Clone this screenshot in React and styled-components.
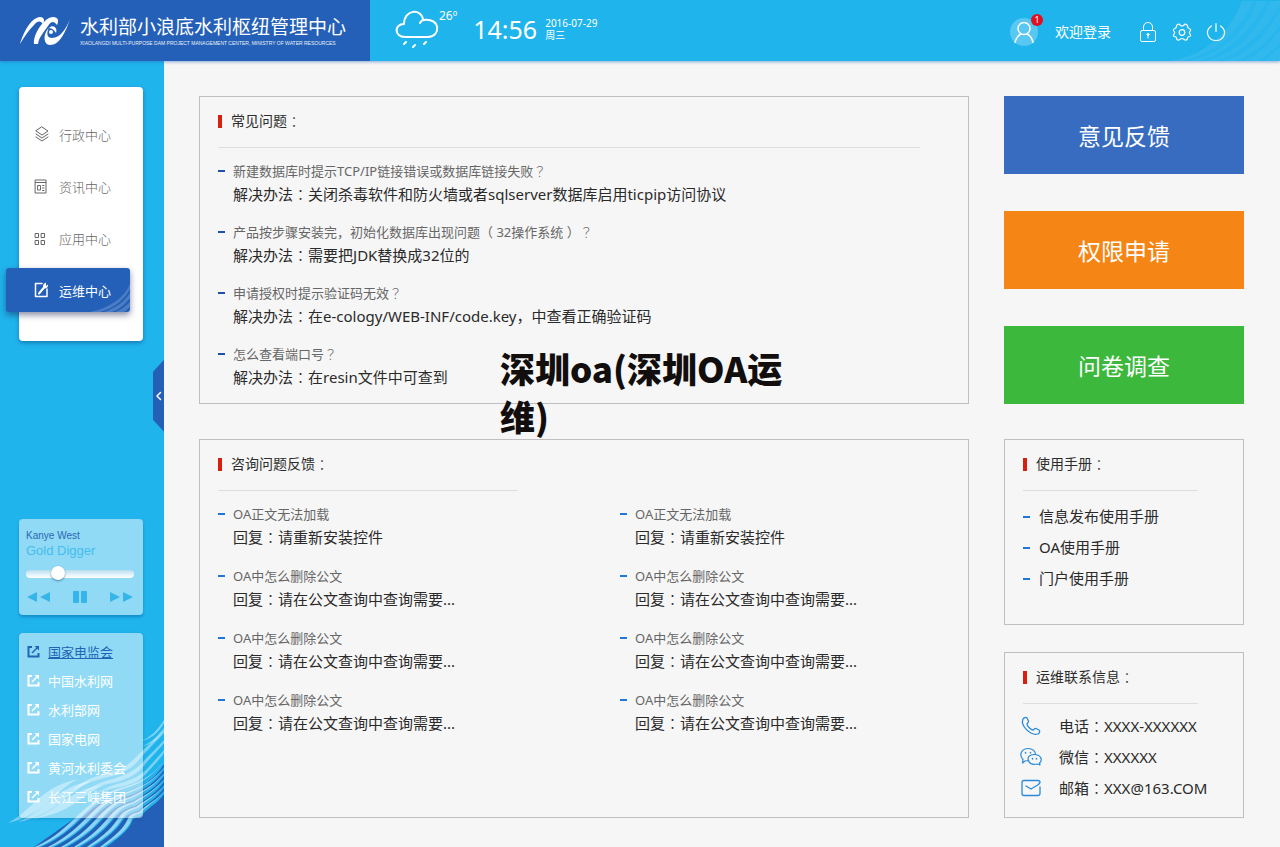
import React from 'react';
import styled, { createGlobalStyle, css } from 'styled-components';

const faqs = [
  { q: '新建数据库时提示TCP/IP链接错误或数据库链接失败？', a: '解决办法：关闭杀毒软件和防火墙或者sqlserver数据库启用ticpip访问协议' },
  { q: '产品按步骤安装完，初始化数据库出现问题（ 32操作系统 ）？', a: '解决办法：需要把JDK替换成32位的' },
  { q: '申请授权时提示验证码无效？', a: '解决办法：在e-cology/WEB-INF/code.key，中查看正确验证码' },
  { q: '怎么查看端口号？', a: '解决办法：在resin文件中可查到' },
];

const loadReply = { q: 'OA正文无法加载', a: '回复：请重新安装控件' };
const deleteReply = { q: 'OA中怎么删除公文', a: '回复：请在公文查询中查询需要...' };
const replies = [
  loadReply, loadReply,
  deleteReply, deleteReply,
  deleteReply, deleteReply,
  deleteReply, deleteReply,
];

const manuals = ['信息发布使用手册', 'OA使用手册', '门户使用手册'];
const sites = ['国家电监会', '中国水利网', '水利部网', '国家电网', '黄河水利委会', '长江三峡集团'];

// full-width marks sit in the middle of their box in the traditional face
function Words({ children }) {
  return children.split(/([：？])/).map((part, i) => (
    i % 2 ? <Mark key={i}>{part}</Mark> : part
  ));
}

function Logo() {
  return (
    <svg width="50" height="30" viewBox="0 0 50 30" fill="#fff" aria-hidden="true">
      <path d="M0 28 C4 15 11 2 20 1 C24 1 25 4 23 8 C20 4 17 5 14 9 C8 15 4 21 0 28Z" />
      <path d="M14 28 C13 22 18 11 25 5 C29 1 36 -1 38 4 C38 6 38 7 37 9 C34 5 31 5 28 10 C24 16 19 21 18 28Z" />
      <path d="M50 3 C46 15 40 29 30 29 C23 29 23 17 29 12 C26 17 27 22 32 22 C40 22 46 13 50 3Z" />
      <path d="M29 12 C33 8 38 12 36 17 C35 15 32 12 29 12Z" />
      <circle cx="31" cy="16" r="2" />
    </svg>
  );
}

function Weather() {
  return (
    <svg width="44" height="38" viewBox="0 0 44 38" fill="none" stroke="#fff" strokeWidth="2" strokeLinecap="round" aria-hidden="true">
      <path d="M10 27 C-1 27 -1 14 9 14 C9 -1 27 -2 28 10 C46 7 46 27 33 27 Z" strokeLinejoin="round" />
      <path d="M25 13 C26 11 27 10 29 10" />
      <path d="M11 32 L9 34 M20 35 L18 37 M31 32 L29 34" />
    </svg>
  );
}

function Rays() {
  return (
    <RaysArt viewBox="0 0 110 60" fill="#fff" fillOpacity="0.08" aria-hidden="true">
      <path d="M0 60 C35 54 58 35 72 0 L110 0 L110 60Z" />
      <g fill="#20b4ed" fillOpacity="0.5">
        <path d="M14 60 C50 50 72 26 84 0 L87 0 C76 30 54 52 20 60Z" />
        <path d="M30 60 C64 48 84 26 97 0 L100 0 C88 30 68 52 36 60Z" />
        <path d="M48 60 C78 48 98 26 110 4 L110 9 C98 32 80 52 54 60Z" />
        <path d="M68 60 C88 50 102 36 110 24 L110 29 C100 42 88 54 74 60Z" />
        <path d="M88 60 C98 54 106 47 110 42 L110 46 L94 60Z" />
      </g>
    </RaysArt>
  );
}

const waveStripes = [0, 1, 2, 3, 4, 5];

function stripePath(i, thickness) {
  const x = 35 + i * 13;
  const y = 44 + i * 6;
  return `M${x} 130 C${x + 40} ${112 - i * 2} ${84 + i * 7} ${80 + i * 4} ${124 + i * 3} ${70 + i * 5} `
    + `C${146 + i} ${64 + i * 4} 156 ${y + 10} 164 ${y} L164 ${y + thickness - 1} `
    + `C156 ${y + 10 + thickness} ${146 + i} ${64 + thickness + i * 4} ${126 + i * 3} ${70 + thickness + i * 5} `
    + `C${88 + i * 7} ${80 + thickness + i * 4} ${x + 44} ${114 - i * 2} ${x + thickness + 2} 130Z`;
}

function Waves() {
  return (
    <WavesArt viewBox="0 0 164 130" aria-hidden="true">
      <path fill="#2460b7" d="M164 47 C152 66 140 70 118 78 C90 88 66 108 34 130 L164 130Z" />
      <g fill="#25b0ea">
        {waveStripes.map((i) => <path key={i} d={stripePath(i, 4)} />)}
      </g>
      <g fill="#d4effb" fillOpacity="0.6">
        {waveStripes.map((i) => <path key={i} d={stripePath(i, 1)} />)}
      </g>
      <g fill="#fff" fillOpacity="0.4">
        <path d="M8 106 C32 94 40 70 78 62 C54 74 44 98 8 106Z" />
        <path d="M18 105 C46 94 54 70 92 64 C66 76 54 99 18 105Z" />
        <path d="M32 102 C58 94 68 72 104 68 C82 78 70 97 32 102Z" />
        <path d="M72 74 C94 52 116 62 136 40 C148 28 156 22 164 13 L164 16 C154 27 146 34 138 44 C120 64 98 57 72 74Z" />
        <path d="M82 77 C104 58 122 66 142 46 C150 37 158 30 164 23 L164 26 C156 36 149 42 143 50 C124 70 106 62 82 77Z" />
        <path d="M94 78 C116 63 132 68 148 51 L164 33 L164 36 C156 47 150 52 146 57 C130 73 116 67 94 78Z" />
        <path d="M139 24 C150 22 158 12 164 3 L164 6 C158 17 150 23 139 24Z" />
        <path d="M142 29 C152 26 158 18 164 11 L164 13 C158 22 152 28 142 29Z" />
      </g>
    </WavesArt>
  );
}

function Icon({ size = 16, box = 16, children, ...rest }) {
  return (
    <svg
      width={size} height={size} viewBox={`0 0 ${box} ${box}`}
      fill="none" stroke="currentColor" strokeLinecap="round" strokeLinejoin="round" aria-hidden="true" {...rest}
    >
      {children}
    </svg>
  );
}

const LayersIcon = () => (
  <Icon>
    <path d="M8 1 L14 5 L8 9 L2 5Z M2 8 L8 12 L14 8 M2 11 L8 15 L14 11" />
  </Icon>
);

const NewsIcon = () => (
  <Icon>
    <path d="M1.5 2 H12 V15 H1.5Z M1.5 4.5 H12 M4 7.5 H6.5 V12 H4Z M8.5 7.5 H10 M8.5 10 H10 M8.5 12.5 H10" />
  </Icon>
);

const AppsIcon = () => (
  <Icon strokeLinejoin="miter">
    <path d="M1.5 3.5 H4.5 V7.5 H1.5Z M7.5 3.5 H10.5 V7.5 H7.5Z M1.5 10.5 H4.5 V14.5 H1.5Z M7.5 10.5 H10.5 V14.5 H7.5Z" />
  </Icon>
);

const WrenchIcon = () => (
  <Icon strokeWidth="1.5">
    <path d="M8 1.5 H1.5 V14.5 H13 V7" />
    <path d="M5 11.5 L10 5.5" strokeWidth="2" />
    <path d="M12 0.5 C8 2 8.5 6 10.5 6.5 C13 6.5 14.5 4.5 14 2.5 L12 4Z" fill="currentColor" stroke="none" />
  </Icon>
);

const ShareIcon = () => (
  <Icon size={13} box={13} strokeWidth="2" strokeLinecap="butt" strokeLinejoin="miter">
    <path d="M5 2 H1.5 V11.5 H11.5 V8" />
    <path d="M5 8 L10 3" strokeWidth="1.5" />
    <path d="M7.5 1 H12 V5.5Z" fill="currentColor" stroke="none" />
  </Icon>
);

const UserIcon = () => (
  <Icon size={22} box={22} strokeWidth="1.5">
    <circle cx="11" cy="7.5" r="6" />
    <path d="M2 21.5 C3 16.5 5 14.5 8 13 M14 13 C17 14.5 19 16.5 20 21.5" />
  </Icon>
);

const LockIcon = () => (
  <Icon size={20} box={20}>
    <rect x="2.5" y="8.5" width="15" height="11" rx="1.5" />
    <path d="M5.5 8.5 V5 C5.5 -1 14.5 -1 14.5 5 V8.5 M10 13 V16" />
    <circle cx="10" cy="12.5" r="1" fill="currentColor" />
  </Icon>
);

const GearIcon = () => (
  <Icon size={20} box={20} strokeWidth="1.2">
    <path d="M8.5 3.5 Q10 4.5 11.5 3.5 L13 2 Q15 2 15.5 4 Q15.5 6 17 6.5 Q19 7 18.5 8.5 L17.5 10 Q17 11 18 12 Q19.5 14 17.5 14.5 Q15.5 14.5 15.5 16.5 Q15 18.5 13 18 L11.5 17 Q10 16 8.5 17 L7 18 Q5 18.5 4.5 16.5 Q4.5 14.5 2.5 14.5 Q0.5 14 2 12 Q3 11 2.5 10 L1.5 8.5 Q1 7 3 6.5 Q4.5 6 4.5 4 Q5 2 7 2Z" />
    <circle cx="10" cy="10.5" r="2.8" />
  </Icon>
);

const PowerIcon = () => (
  <Icon size={20} box={20} strokeWidth="1.2">
    <path d="M10 1.5 V9.5 M5.5 4 C-2 9 2 18.5 10 18.5 C18 18.5 22 9 14.5 4" />
  </Icon>
);

const PhoneIcon = () => (
  <Icon size={22} box={22} strokeWidth="1.3">
    <path d="M3 4 C4 2.5 6 2 7 3 L8.5 6 C9 7.5 7 8 7 9 C7 11 11 15 13 15 C14 15 14.5 13 16 13.5 L19 15 C20.5 16 19.5 18 18 19 C11 21 0 11 3 4Z" />
  </Icon>
);

const WechatIcon = () => (
  <Icon size={22} box={22} strokeWidth="1.2">
    <path d="M8.5 14.5 L5 15 L2.5 17 L3 13.5 C-2 8 2.5 2.5 8 2.5 C13 2.5 15.5 5.5 15.5 8.5 M8.5 14.5 C7 11 10 8.5 14 8.5 C21 8.5 23 14 19.5 17 L20 19 L17.5 18 C13 19 9.5 18 8.5 14.5" />
    <path d="M5.5 6.5 V7 M10.5 6.5 V7 M12.5 12.5 V13 M16.5 12.5 V13" strokeWidth="1.5" />
  </Icon>
);

const MailIcon = () => (
  <Icon size={22} box={22} strokeWidth="1.3">
    <path d="M20 10 V16 C20 18 19.5 18.5 18 18.5 H4 C2.5 18.5 2 18 2 16.5 V5.5 C2 4 2.5 3.5 4 3.5 H18 C19.5 3.5 20 4 20 5.5 L18.5 7.5 L11 12 L6 9" />
  </Icon>
);

const menu = [
  { label: '行政中心', icon: <LayersIcon /> },
  { label: '资讯中心', icon: <NewsIcon /> },
  { label: '应用中心', icon: <AppsIcon /> },
  { label: '运维中心', icon: <WrenchIcon />, active: true },
];

const contacts = [
  { text: '电话：XXXX-XXXXXX', icon: <PhoneIcon /> },
  { text: '微信：XXXXXX', icon: <WechatIcon /> },
  { text: '邮箱：XXX@163.COM', icon: <MailIcon /> },
];

function QuestionItem({ item, dark }) {
  return (
    <Entry $dark={dark}>
      <Question><Words>{item.q}</Words></Question>
      <Answer><Words>{item.a}</Words></Answer>
    </Entry>
  );
}

function App() {
  const [position, setPosition] = React.useState(27);

  return (
    <Page>
      <GlobalStyle />

      <Header>
        <Brand>
          <Logo />
          <BrandText>
            <BrandName>水利部小浪底水利枢纽管理中心</BrandName>
            <BrandSub>XIAOLANGDI MULTI-PURPOSE DAM PROJECT MANAGEMENT CENTER, MINISTRY OF WATER RESOURCES</BrandSub>
          </BrandText>
        </Brand>
        <Forecast>
          <Weather />
          <Degrees>26º</Degrees>
          <Clock>14:56</Clock>
          <DateText>
            <span>2016-07-29</span>
            <span>周三</span>
          </DateText>
        </Forecast>
        <Rays />
        <Account>
          <Avatar>
            <UserIcon />
            <Badge>1</Badge>
          </Avatar>
          <Welcome href="#login">欢迎登录</Welcome>
          <Tools>
            <ToolButton aria-label="锁定"><LockIcon /></ToolButton>
            <ToolButton aria-label="设置"><GearIcon /></ToolButton>
            <ToolButton aria-label="退出"><PowerIcon /></ToolButton>
          </Tools>
        </Account>
      </Header>

      <Body>
        <Sidebar>
          <Waves />
          <Menu>
            {menu.map((item) => (
              <MenuItem key={item.label} href="#menu" $active={item.active}>
                {item.active && (
                  <MenuRays viewBox="0 0 40 28" fill="#fff" fillOpacity="0.18" aria-hidden="true">
                    <path d="M0 28 C20 24 34 14 40 0 L40 5 C34 16 24 24 10 28Z" />
                    <path d="M14 28 C26 24 34 18 40 9 L40 14 C34 21 30 25 22 28Z" />
                    <path d="M26 28 C32 25 36 22 40 18 L40 23 L34 28Z" />
                  </MenuRays>
                )}
                {item.icon}
                <span>{item.label}</span>
              </MenuItem>
            ))}
          </Menu>

          <Player>
            <Artist>Kanye West</Artist>
            <Song>Gold Digger</Song>
            <Track
              type="range"
              min="0"
              max="100"
              aria-label="播放进度"
              value={position}
              onChange={(e) => setPosition(Number(e.target.value))}
            />
            <PlayerButtons>
              <PlayerButton aria-label="上一首">
                <svg width="24" height="12" viewBox="0 0 24 12" fill="currentColor"><path d="M11 1 V11 L1 6Z M24 1 V11 L14 6Z" /></svg>
              </PlayerButton>
              <PlayerButton aria-label="暂停">
                <svg width="14" height="12" viewBox="0 0 14 12" fill="currentColor"><rect width="6" height="12" rx="1" /><rect x="8" width="6" height="12" rx="1" /></svg>
              </PlayerButton>
              <PlayerButton aria-label="下一首">
                <svg width="24" height="12" viewBox="0 0 24 12" fill="currentColor"><path d="M0 1 V11 L10 6Z M13 1 V11 L23 6Z" /></svg>
              </PlayerButton>
            </PlayerButtons>
          </Player>

          <Sites>
            {sites.map((name, i) => (
              <SiteLink key={name} href="#site" $current={i === 0}>
                <ShareIcon />
                <span>{name}</span>
              </SiteLink>
            ))}
          </Sites>

          <Collapse aria-label="收起">
            <Icon size={10} box={10} strokeWidth="1.5"><path d="M6.5 1.5 L3 5 L6.5 8.5" /></Icon>
          </Collapse>
        </Sidebar>

        <Main>
          <Column>
            <Panel>
              <PanelTitle><Words>常见问题：</Words></PanelTitle>
              <Divider $inset={30} />
              <Entries $rowGap={15}>
                {faqs.map((item) => <QuestionItem key={item.q} item={item} dark />)}
              </Entries>
            </Panel>
            <Panel $grow>
              <PanelTitle><Words>咨询问题反馈：</Words></PanelTitle>
              <Divider $width={300} />
              <Entries $columns={2} $rowGap={16}>
                {replies.map((item, i) => <QuestionItem key={i} item={item} />)}
              </Entries>
            </Panel>
          </Column>

          <Column>
            <Actions>
              <ActionButton $color="#376cc0">意见反馈</ActionButton>
              <ActionButton $color="#f58514">权限申请</ActionButton>
              <ActionButton $color="#3cb83c">问卷调查</ActionButton>
            </Actions>
            <SidePanels>
              <Panel $grow>
                <PanelTitle><Words>使用手册：</Words></PanelTitle>
                <Divider $width={175} />
                <Manuals>
                  {manuals.map((name) => <Manual key={name}>{name}</Manual>)}
                </Manuals>
              </Panel>
              <Panel>
                <PanelTitle><Words>运维联系信息：</Words></PanelTitle>
                <Divider $width={175} />
                <Contacts>
                  {contacts.map((item) => (
                    <Contact key={item.text}>
                      {item.icon}
                      <span><Words>{item.text}</Words></span>
                    </Contact>
                  ))}
                </Contacts>
              </Panel>
            </SidePanels>
          </Column>
        </Main>
      </Body>

      <Caption>深圳oa(深圳OA运<br />维)</Caption>
    </Page>
  );
}
export default App;

const GlobalStyle = createGlobalStyle`
  * {
    box-sizing: border-box;
  }

  body {
    margin: 0;
    background: #f6f6f6;
    font-family: "Noto Sans", "Noto Sans CJK SC", sans-serif;
  }

  button {
    padding: 0;
    border: none;
    background: none;
    font: inherit;
    color: inherit;
    cursor: pointer;
  }

  a {
    color: inherit;
    text-decoration: none;
  }

  h1, h2, p, ul {
    margin: 0;
    padding: 0;
    font-weight: 400;
    list-style: none;
  }

  svg {
    display: block;
    flex-shrink: 0;
  }
`;

const Page = styled.div`
  position: relative;
  display: flex;
  flex-direction: column;
  min-height: 100vh;
`;

const Mark = styled.span`
  font-family: "Noto Sans CJK TC", sans-serif;
  font-weight: 300;
`;

const Header = styled.header`
  position: relative;
  z-index: 1;
  display: flex;
  align-items: center;
  height: 61px;
  background: #20b4ed;
  color: #fff;
  box-shadow: 0 1px 3px rgba(36, 96, 183, 0.5);
`;

const Brand = styled.div`
  display: flex;
  align-items: center;
  gap: 10px;
  width: 370px;
  height: 100%;
  padding-left: 20px;
  background: #2460b7;
`;

const BrandText = styled.div`
  display: flex;
  flex-direction: column;
`;

const BrandName = styled.h1`
  font-size: 19px;
  line-height: 24px;
  white-space: nowrap;
`;

const BrandSub = styled.p`
  font-family: "Liberation Sans", sans-serif;
  font-size: 5px;
  line-height: 8px;
  white-space: nowrap;
  opacity: 0.9;
`;

const Forecast = styled.div`
  display: flex;
  align-items: center;
  margin: 0 0 4px 25px;
`;

const Degrees = styled.span`
  align-self: flex-start;
  font-size: 12px;
  line-height: 12px;
`;

const Clock = styled.span`
  margin-left: 16px;
  font-size: 25px;
  line-height: 30px;
`;

const DateText = styled.div`
  display: flex;
  flex-direction: column;
  margin-left: 8px;
  font-size: 10px;
  line-height: 12px;
`;

const RaysArt = styled.svg`
  position: absolute;
  right: 0;
  bottom: 0;
  width: 110px;
  height: 60px;
`;

const Account = styled.div`
  position: relative;
  display: flex;
  align-items: center;
  margin: 3px 54px 0 auto;
`;

const Avatar = styled.div`
  position: relative;
  display: flex;
  align-items: center;
  justify-content: center;
  width: 28px;
  height: 28px;
  border-radius: 50%;
  background: rgba(255, 255, 255, 0.25);
`;

const Badge = styled.span`
  position: absolute;
  top: -4px;
  right: -5px;
  width: 12px;
  height: 12px;
  border-radius: 50%;
  background: #e01020;
  font-size: 9px;
  line-height: 12px;
  text-align: center;
`;

const Welcome = styled.a`
  margin-left: 17px;
  font-size: 14px;
  line-height: 20px;
`;

const Tools = styled.div`
  display: flex;
  gap: 14px;
  margin-left: 27px;
`;

const ToolButton = styled.button`
  color: #fff;
`;

const Body = styled.div`
  display: flex;
  flex: 1;
`;

const Sidebar = styled.aside`
  position: relative;
  display: flex;
  flex-direction: column;
  width: 164px;
  padding: 26px 21px 29px 19px;
  background: #20b4ed;
`;

const WavesArt = styled.svg`
  position: absolute;
  left: 0;
  bottom: 0;
  width: 164px;
  height: 130px;
`;

const Menu = styled.nav`
  display: flex;
  flex-direction: column;
  gap: 8px;
  padding: 25px 0 29px;
  border-radius: 4px;
  background: #fff;
  box-shadow: 0 2px 4px rgba(0, 60, 110, 0.45);
`;

const MenuItem = styled.a`
  position: relative;
  display: flex;
  align-items: center;
  gap: 9px;
  height: 44px;
  padding-left: 15px;
  color: #666;
  font-size: 13px;
  font-weight: 300;

  ${({ $active }) => $active && css`
    margin: 0 13px 0 -13px;
    padding-left: 28px;
    border-radius: 3px;
    background: #2460b7;
    color: #fff;
    box-shadow: 0 3px 6px rgba(20, 30, 80, 0.5);
    font-weight: 400;
  `}
`;

const MenuRays = styled.svg`
  position: absolute;
  right: 0;
  bottom: 0;
  width: 40px;
  height: 28px;
`;

const Player = styled.section`
  position: relative;
  margin-top: auto;
  padding: 10px 9px 12px 7px;
  border-radius: 4px;
  background: rgba(255, 255, 255, 0.5);
  box-shadow: 0 2px 3px rgba(0, 80, 140, 0.4);
  font-family: "Liberation Sans", sans-serif;
`;

const Artist = styled.p`
  color: #2a68b4;
  font-size: 10px;
  line-height: 14px;
`;

const Song = styled.p`
  color: #45bdee;
  font-size: 13px;
  line-height: 16px;
`;

const Track = styled.input`
  display: block;
  appearance: none;
  width: 100%;
  height: 14px;
  margin: 8px 0 0;
  background: none;

  &::-webkit-slider-runnable-track {
    height: 8px;
    border-radius: 4px;
    background: linear-gradient(#b9dcee, #e4f4fb 60%, #fff);
  }

  &::-webkit-slider-thumb {
    appearance: none;
    width: 14px;
    height: 14px;
    margin-top: -4px;
    border-radius: 50%;
    background: #fff;
    box-shadow: 0 1px 2px rgba(0, 50, 90, 0.5);
  }
`;

const PlayerButtons = styled.div`
  display: flex;
  align-items: center;
  justify-content: space-between;
  margin-top: 10px;
`;

const PlayerButton = styled.button`
  color: #35b5e9;
`;

const Sites = styled.nav`
  position: relative;
  margin-top: 18px;
  padding: 4px 8px 7px;
  border-radius: 4px;
  background: rgba(255, 255, 255, 0.5);
  box-shadow: 0 1px 3px rgba(0, 80, 140, 0.3);
`;

const SiteLink = styled.a`
  display: flex;
  align-items: center;
  gap: 8px;
  height: 29px;
  color: ${({ $current }) => ($current ? '#2064b4' : '#fff')};
  font-size: 13px;
  white-space: nowrap;

  span {
    text-decoration: ${({ $current }) => ($current ? 'underline' : 'none')};
  }
`;

const Collapse = styled.button`
  position: absolute;
  top: 38%;
  right: 0;
  display: flex;
  align-items: center;
  justify-content: center;
  width: 11px;
  height: 72px;
  background: #2460b7;
  clip-path: polygon(0 12px, 100% 0, 100% 100%, 0 60px);
  color: #fff;
`;

const Main = styled.main`
  display: grid;
  grid-template-columns: 1fr 240px;
  gap: 35px;
  flex: 1;
  padding: 35px 36px 29px 35px;
`;

const Column = styled.div`
  display: flex;
  flex-direction: column;
  gap: 35px;
`;

const Panel = styled.section`
  flex: ${({ $grow }) => ($grow ? '1' : 'none')};
  padding: 12px 18px 14px;
  border: 1px solid #bfbfbf;
`;

const PanelTitle = styled.h2`
  display: flex;
  align-items: center;
  color: #2c2c2c;
  font-size: 14px;
  line-height: 24px;

  &::before {
    content: '';
    width: 4px;
    height: 13px;
    margin-right: 9px;
    background: #d8200f;
  }
`;

const Divider = styled.div`
  width: ${({ $width }) => ($width ? `${$width}px` : 'auto')};
  height: 1px;
  margin: 14px ${({ $inset }) => $inset || 0}px 0 0;
  background: #dedede;
`;

const Entries = styled.div`
  display: grid;
  grid-template-columns: repeat(${({ $columns }) => $columns || 1}, 1fr);
  gap: ${({ $rowGap }) => $rowGap}px 72px;
  margin-top: 12px;
`;

const Entry = styled.article`
  position: relative;
  padding-left: 15px;

  &::before {
    content: '';
    position: absolute;
    top: 10px;
    left: 0;
    width: 7px;
    height: 2px;
    background: ${({ $dark }) => ($dark ? '#1d51a8' : '#1f78d8')};
  }
`;

const Question = styled.p`
  color: #666;
  font-size: 13px;
  line-height: 22px;
`;

const Answer = styled.p`
  color: #2a2a2a;
  font-size: 15px;
  line-height: 24px;
`;

const Actions = styled.div`
  display: flex;
  flex-direction: column;
  gap: 37px;
`;

const ActionButton = styled.button`
  height: 78px;
  background: ${({ $color }) => $color};
  color: #fff;
  font-size: 23px;
`;

const SidePanels = styled.div`
  display: flex;
  flex-direction: column;
  flex: 1;
  gap: 27px;
`;

const Manuals = styled.ul`
  margin-top: 10px;
`;

const Manual = styled.li`
  display: flex;
  align-items: center;
  color: #2a2a2a;
  font-size: 15px;
  line-height: 31px;

  &::before {
    content: '';
    width: 7px;
    height: 2px;
    margin-right: 9px;
    background: #1f78d8;
  }
`;

const Contacts = styled.ul`
  margin-top: 6px;
`;

const Contact = styled.li`
  display: flex;
  align-items: center;
  gap: 17px;
  height: 31px;
  margin-left: -3px;
  color: #2a2a2a;
  font-size: 15px;
  white-space: nowrap;

  svg {
    color: #2a8ad8;
  }
`;

const Caption = styled.p`
  position: absolute;
  z-index: 2;
  top: 344px;
  left: 50%;
  width: 280px;
  margin-left: -140px;
  color: #120e0e;
  font-family: "Noto Sans CJK SC", sans-serif;
  font-size: 35px;
  font-weight: 900;
  line-height: 48px;
  white-space: nowrap;
`;
